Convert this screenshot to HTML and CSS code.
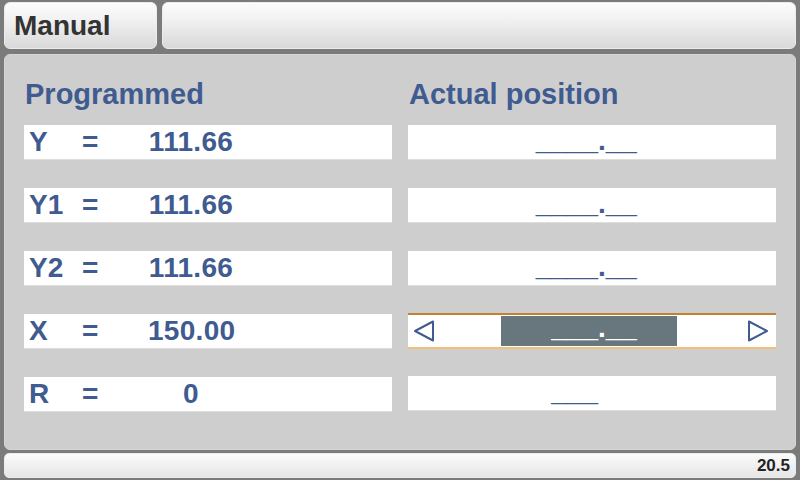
FILE: index.html
```html
<!DOCTYPE html>
<html lang="en">
<head>
    <meta charset="UTF-8">
    <meta name="viewport" content="width=device-width, initial-scale=1.0">
    <title>Manual</title>
    <link rel="stylesheet" href="styles.css">
</head>
<body>

    <!-- Top tab bar -->
    <div class="tabs">
        <div class="tab tab-title">Manual</div>
        <div class="tab tab-fill"></div>
    </div>

    <!-- Main panel -->
    <div class="panel">
        <div class="column">
            <h3>Programmed</h3>
            <div class="field prog"><span class="axis">Y</span><span class="eq">=</span><span class="val">111.66</span></div>
            <div class="field prog"><span class="axis">Y1</span><span class="eq">=</span><span class="val">111.66</span></div>
            <div class="field prog"><span class="axis">Y2</span><span class="eq">=</span><span class="val">111.66</span></div>
            <div class="field prog"><span class="axis">X</span><span class="eq">=</span><span class="val">150.00</span></div>
            <div class="field prog"><span class="axis">R</span><span class="eq">=</span><span class="val">0</span></div>
        </div>
        <div class="column">
            <h3>Actual position</h3>
            <div class="field pos"><span class="int">____</span><span class="dec">.__</span></div>
            <div class="field pos"><span class="int">____</span><span class="dec">.__</span></div>
            <div class="field pos"><span class="int">____</span><span class="dec">.__</span></div>
            <div class="field pos active">
                <svg class="arrow" width="22" height="24" viewBox="0 0 22 24">
                    <path d="M2 12 L20 2.5 L20 21.5 Z" fill="none" stroke="#3f5b90" stroke-width="2" stroke-linejoin="round"/>
                </svg>
                <div class="edit"><span class="int">___</span><span class="dec">.__</span></div>
                <svg class="arrow arrow-right" width="22" height="24" viewBox="0 0 22 24">
                    <path d="M20 12 L2 2.5 L2 21.5 Z" fill="none" stroke="#3f5b90" stroke-width="2" stroke-linejoin="round"/>
                </svg>
            </div>
            <div class="field pos"><span class="int">___</span></div>
        </div>
    </div>

    <!-- Status bar -->
    <div class="status">20.5</div>

</body>
</html>
```

FILE: styles.css
```css
body {
    margin: 0;
    padding: 2px 4px 0 4px;
    width: 792px;
    height: 478px;
    background-color: #7b7b7b;
    font-family: "Liberation Sans", Arial, sans-serif;
    font-weight: bold;
    overflow: hidden;
}
.tabs {
    display: flex;
    gap: 5px;
    height: 47px;
}
.tab {
    box-sizing: border-box;
    border-radius: 6px;
    border: 1px solid #ececec;
    background: linear-gradient(#fbfbfb, #f2f2f2 35%, #d9d9d9);
}
.tab-title {
    width: 153px;
    font-size: 28px;
    color: #333333;
    padding-left: 9px;
    line-height: 46px;
}
.tab-fill {
    flex: 1;
}
.panel {
    box-sizing: border-box;
    margin-top: 5px;
    height: 396px;
    background-color: #cecece;
    border-radius: 6px;
    border: 1px solid #d6d6d6;
    padding: 23px 19px 0 19px;
    display: flex;
    gap: 16px;
}
.column {
    flex: 1;
    display: flex;
    flex-direction: column;
    gap: 28px;
}
h3 {
    margin: 0 0 -13px 1px;
    font-size: 29px;
    line-height: 32px;
    color: #3f5b90;
}
.field {
    box-sizing: border-box;
    height: 35px;
    background-color: white;
    border-bottom: 1px solid #dedede;
    color: #3f5b90;
    font-size: 28px;
    line-height: 34px;
}
.prog {
    display: flex;
    padding-left: 5px;
}
.axis {
    width: 53px;
}
.eq {
    width: 66px;
}
.val {
    width: 86px;
    text-align: center;
    letter-spacing: 0.3px;
}
.pos {
    display: flex;
    line-height: 32px;
}
.pos > .int {
    width: 190px;
    text-align: right;
}
.active {
    height: 36px;
    margin-top: -1px;
    margin-bottom: -1px;
    border-top: 2px solid #c2822f;
    border-bottom: 2px solid #f0bf7c;
    padding: 0 7px 0 5px;
    align-items: center;
}
.arrow {
    display: block;
}
.arrow-right {
    margin-left: auto;
}
.edit {
    display: flex;
    margin-left: 66px;
    width: 176px;
    height: 30px;
    background-color: #68777e;
    color: white;
    line-height: 24px;
}
.edit .int {
    width: 97px;
    text-align: right;
}
.status {
    box-sizing: border-box;
    margin-top: 3px;
    height: 25px;
    border-radius: 5px;
    border: 1px solid #ececec;
    background: linear-gradient(#fbfbfb, #e6e6e6);
    font-size: 17px;
    color: #222222;
    text-align: right;
    padding-right: 5px;
    line-height: 24px;
}
```
